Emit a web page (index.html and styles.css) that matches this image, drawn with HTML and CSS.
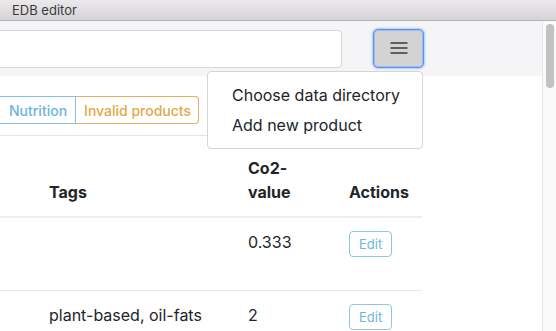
FILE: index.html
```html
<!DOCTYPE html>
<html lang="en">
<head>
    <meta charset="UTF-8">
    <meta name="viewport" content="width=device-width, initial-scale=1.0">
    <title>EDB editor</title>
    <link rel="stylesheet" href="styles.css">
</head>
<body>

<div class="titlebar">EDB editor</div>

<div class="window">
    <div class="page">
        <!-- Top bar: search + menu -->
        <nav class="navbar">
            <input class="search" type="text">
            <div class="menu">
                <button class="menu-btn" aria-label="Menu">
                    <svg width="18" height="12" viewBox="0 0 18 12">
                        <path d="M0.5 1H17.5M0.5 6H17.5M0.5 11H17.5" stroke="#3a3a3a" stroke-width="1.6"/>
                    </svg>
                </button>
                <div class="dropdown">
                    <a class="dropdown-item">Choose data directory</a>
                    <a class="dropdown-item">Add new product</a>
                </div>
            </div>
        </nav>

        <div class="content">
            <div class="btn-group">
                <button class="btn-info">Nutrition</button>
                <button class="btn-warning">Invalid products</button>
            </div>

            <table class="products">
                <colgroup>
                    <col class="col-name">
                    <col class="col-tags">
                    <col class="col-co2">
                    <col class="col-actions">
                </colgroup>
                <thead>
                    <tr>
                        <th></th>
                        <th>Tags</th>
                        <th>Co2-value</th>
                        <th>Actions</th>
                    </tr>
                </thead>
                <tbody>
                    <tr class="tall">
                        <td></td>
                        <td></td>
                        <td>0.333</td>
                        <td><button class="edit">Edit</button></td>
                    </tr>
                    <tr>
                        <td></td>
                        <td>plant-based, oil-fats</td>
                        <td>2</td>
                        <td><button class="edit">Edit</button></td>
                    </tr>
                </tbody>
            </table>
        </div>
    </div>

    <div class="scrollbar"><div class="thumb"></div></div>
</div>

</body>
</html>
```

FILE: styles.css
```css
html, body {
    margin: 0;
    height: 100%;
    overflow: hidden;
}
body {
    font-family: Inter, "Liberation Sans", Arial, sans-serif;
    color: #212529;
    background-color: #fff;
}
.titlebar {
    height: 20px;
    line-height: 21px;
    padding-left: 12px;
    font-size: 13px;
    color: #3b3b3b;
    background: linear-gradient(#ebe9eb, #d5d3d5);
    border-bottom: 1px solid #b4b4b4;
}
.window {
    display: flex;
    height: 310px;
}
.page {
    flex: 1;
    overflow: hidden;
}
.navbar {
    display: flex;
    align-items: center;
    gap: 31px;
    height: 55px;
    padding-right: 118px;
    background-color: #f5f5f7;
    border-bottom-right-radius: 4px;
}
.search {
    flex: 1;
    margin-left: -20px;
    height: 38px;
    box-sizing: border-box;
    border: 1px solid #d2d5d9;
    border-radius: 4px;
    background-color: #fff;
}
.menu {
    position: relative;
}
.menu-btn {
    display: flex;
    align-items: center;
    justify-content: center;
    width: 51px;
    height: 39px;
    margin-top: -1px;
    border: 1px solid #5e93ea;
    border-radius: 5px;
    background-color: #d3d3d3;
    box-shadow: inset 0 0 0 1px #9dbcf2, 0 0 2px 1px rgba(90, 145, 235, 0.45);
    cursor: pointer;
}
.dropdown {
    position: absolute;
    top: calc(100% + 3px);
    right: 1px;
    width: 216px;
    box-sizing: border-box;
    padding: 8px 0;
    background-color: #fff;
    border: 1px solid #d4d4d4;
    border-radius: 4px;
    z-index: 10;
}
.dropdown-item {
    display: block;
    padding: 0 24px;
    line-height: 30px;
    font-size: 16px;
    white-space: nowrap;
    color: #212529;
}
.content {
    margin-left: -100px;
}
.btn-group {
    display: flex;
    margin: 20px 0 11px 98px;
}
.btn-group button {
    height: 28px;
    font-family: inherit;
    font-size: 14px;
    font-weight: 500;
    background-color: #fff;
    cursor: pointer;
}
.btn-info {
    padding: 0 8px 0 10px;
    color: #6cb5dc;
    border: 1px solid #86c2e2;
}
.btn-warning {
    padding: 0 7px 0 8px;
    color: #e2a84a;
    border: 1px solid #e3b15e;
    border-left: none;
    border-radius: 0 4px 4px 0;
}
.products {
    width: 522px;
    table-layout: fixed;
    border-collapse: collapse;
    font-size: 16px;
    line-height: 24px;
}
.col-name { width: 137px; }
.col-tags { width: 199px; }
.col-co2 { width: 101px; }
.col-actions { width: 85px; }
.products th {
    padding: 20px 12px 12px;
    text-align: left;
    vertical-align: bottom;
    font-weight: 700;
    border-top: 1px solid #e3e5e8;
    border-bottom: 2px solid #ebedef;
}
.products td {
    padding: 12px;
    vertical-align: top;
    border-top: 1px solid #e6e8ea;
}
.products tr.tall td {
    height: 48px;
}
.edit {
    margin-top: 1px;
    padding: 3px 9px;
    font-family: inherit;
    font-size: 13px;
    line-height: 18px;
    color: #6cb5dc;
    background-color: #fff;
    border: 1px solid #8dc6e3;
    border-radius: 4px;
    cursor: pointer;
}
.scrollbar {
    width: 14px;
    box-sizing: border-box;
    background-color: #fafafa;
    border-left: 1px solid #e6e6e6;
    padding: 3px 2px 0 3px;
}
.thumb {
    width: 8px;
    height: 64px;
    border-radius: 4px;
    background-color: #c2c2c2;
}
```
